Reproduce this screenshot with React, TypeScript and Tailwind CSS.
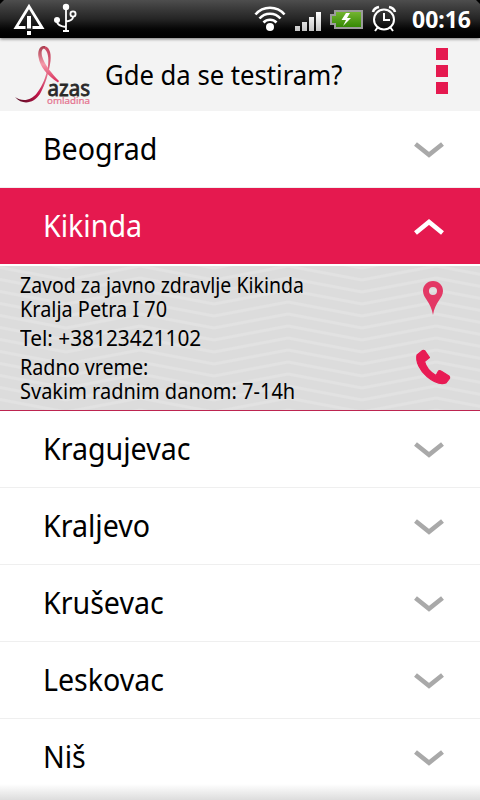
import React from "react";

const FONT = "font-['Noto_Sans','Open_Sans',sans-serif]";

function Chevron({ up = false }: { up?: boolean }) {
  return (
    <svg width="32" height="20" viewBox="0 0 32 20" fill="none" className="mr-[35px] shrink-0">
      {up ? (
        <path d="M2.5 17 L16 6 L29.5 17" stroke="#fff" strokeWidth="4.6" />
      ) : (
        <path d="M2.5 5 L16 15.800 L29.5 5" stroke="#a9a9a9" strokeWidth="4.6" />
      )}
    </svg>
  );
}

function StatusBar() {
  return (
    <div className="relative z-10 flex h-[38px] shrink-0 bg-linear-to-b from-[#4e4e4e] via-[#252525] via-50% to-black shadow-[0_1px_3px_rgba(0,0,0,0.55)]">
      <svg width="480" height="38" viewBox="0 0 480 38" fill="none">
        <defs>
          <linearGradient id="sig" x1="0" y1="0" x2="0" y2="1">
            <stop offset="0" stopColor="#fff" />
            <stop offset="1" stopColor="#c4c4c4" />
          </linearGradient>
          <linearGradient id="bat" x1="0" y1="0" x2="0" y2="1">
            <stop offset="0" stopColor="#77b733" />
            <stop offset="1" stopColor="#318600" />
          </linearGradient>
        </defs>
        <path d="M0 0H4L0 4ZM480 0H476L480 4Z" fill="#000" />
        <path d="M29 6.500 L42 27.500 H16 Z" stroke="#fff" strokeWidth="2.800" />
        <path d="M25.500 16H32.500V30H25.500Z" fill="#1e1e1e" />
        <path d="M27 16H31V28.500H27ZM27 31H31V35H27Z" fill="#fff" />
        <g stroke="#fff" strokeWidth="1.8">
          <path d="M66 7V31M57 21Q57 26 66 27M73 16V17Q73 20.500 66 21.500" />
          <circle cx="73" cy="14" r="2.600" fill="#333" />
        </g>
        <g fill="#fff">
          <circle cx="66" cy="7" r="3.2" />
          <circle cx="57" cy="20" r="3" />
          <path d="M63 30H69V32H63Z" />
        </g>
        <g stroke="#fff" strokeWidth="2.600">
          <path d="M255.500 14.500A19 19 0 0 1 284.500 14.500M259.500 18.500A14 14 0 0 1 280.500 18.500M263.500 22.500A9 9 0 0 1 276.500 22.500" />
        </g>
        <circle cx="270" cy="27" r="4" fill="#fff" />
        <path d="M295 26h5v5h-5zM302 22h5v9h-5zM309 17h5v14h-5zM316 12h5v19h-5z" fill="url(#sig)" />
        <path d="M335 11H362V28H335V24H331V15H335Z" fill="url(#bat)" stroke="#9b9b9b" strokeWidth="2" />
        <path d="M346 13L341.500 20H346L343 26L351 18H347L350 13Z" fill="#fff" />
        <g stroke="#fff">
          <circle cx="384" cy="19.500" r="10" strokeWidth="2" />
          <path d="M384 13V20H390" strokeWidth="2" />
          <path d="M373 12Q374 8 379 7M389 7Q394 8 395 12" strokeWidth="2.600" />
          <path d="M378 27L375 31M390 27L393 31" strokeWidth="2" />
        </g>
        <text x="412" y="27.500" fontSize="23" fontWeight="700" fill="#fff" textLength="59" lengthAdjust="spacingAndGlyphs" className={FONT}>00:16</text>
      </svg>
    </div>
  );
}

function Logo() {
  return (
    <svg width="96" height="72" viewBox="0 38 96 72" fill="none" className="shrink-0">
      <defs>
        <linearGradient id="tail" x1="0" y1="1" x2="1" y2="0">
          <stop offset="0" stopColor="#4e0b20" />
          <stop offset=".4" stopColor="#c3164a" />
          <stop offset=".7" stopColor="#e4778f" />
          <stop offset="1" stopColor="#c03a55" />
        </linearGradient>
        <linearGradient id="loop" x1="0" y1="0" x2="0" y2="1">
          <stop offset="0" stopColor="#a73b4c" />
          <stop offset=".5" stopColor="#f59aaa" />
          <stop offset="1" stopColor="#d72756" />
        </linearGradient>
      </defs>
      <path d="M15 96C22 101 31 100 37 92C43 84 46 76 48 65C49 57 48 50 44 47.500L43 45C49 45 51.500 51 50.500 60C49 72 45 84 40 93C34 102 23 105 15 96Z" fill="url(#tail)" />
      <path d="M45 45C39.500 44 37.500 50 38.500 56C40 66 47 74 58 81.500L59 80C52 73 44 63 42 55C41 50 42 47.500 45 47.500Z" fill="url(#loop)" />
      <text x="47.500" y="94.500" fontSize="21.500" fill="#292929" stroke="#292929" strokeWidth=".8" textLength="42.500" lengthAdjust="spacingAndGlyphs" className={FONT}>azas</text>
      <text x="47" y="102.500" fontSize="8" fill="#e57591" stroke="#e57591" strokeWidth=".2" textLength="43" lengthAdjust="spacingAndGlyphs" className={FONT}>omladina</text>
    </svg>
  );
}

function Row({ name, active = false }: { name: string; active?: boolean }) {
  return (
    <div className={active ? "flex h-[76px] shrink-0 items-center justify-between bg-[#e5194f] pl-[43px] text-white" : "flex h-[77px] shrink-0 items-center justify-between border-b border-[#efefef] bg-white pl-[43px] text-black"}>
      <span className="origin-left scale-x-[0.953] text-[30px] leading-[40px]">{name}</span>
      <Chevron up={active} />
    </div>
  );
}

function Details() {
  return (
    <div className="relative mt-[2px] flex h-[145px] shrink-0 justify-between border-b border-[#bd2450] bg-[#dcdcdc]">
      <svg width="480" height="144" className="absolute inset-0">
        <defs>
          <pattern id="waves" width="148" height="12" patternUnits="userSpaceOnUse" x="-8">
            <path d="M-10 -10L0 -12L74 2L148 -12L158 -10M-10 2L0 0L74 14L148 0L158 2M-10 14L0 12L74 26L148 12L158 14" fill="none" stroke="#e2e2e2" strokeWidth="3" />
          </pattern>
        </defs>
        <rect width="480" height="144" fill="url(#waves)" />
      </svg>
      <div className="relative flex flex-col gap-[5px] pl-5 pt-[7px] text-[21.500px] leading-[24px] whitespace-nowrap text-black">
        <div>
          <p className="origin-left scale-x-[0.906]">Zavod za javno zdravlje Kikinda</p>
          <p className="origin-left scale-x-[0.925]">Kralja Petra I 70</p>
        </div>
        <p className="origin-left scale-x-[0.969]">Tel: +38123421102</p>
        <div>
          <p className="origin-left scale-x-[0.917]">Radno vreme:</p>
          <p className="origin-left scale-x-[0.93]">Svakim radnim danom: 7-14h</p>
        </div>
      </div>
      <svg width="60" height="144" viewBox="405 266 60 144" className="relative mr-[15px] shrink-0">
        <path fillRule="evenodd" d="M433 281C427 281 423 285.500 423 291C423 298 431 302 433 315C435 302 443 298 443 291C443 285.500 439 281 433 281ZM433 287A4 4 0 1 1 433 295A4 4 0 1 1 433 287Z" fill="#e33865" />
        <path d="M417 355L422.500 350.500Q424 350 425 351L429.500 357.500L424.500 361.500C426 367.500 430.500 372.500 436 375.500L438.500 371Q439.500 370 441 371L449 376Q450 377 449.500 378.500L446 383C441 384.500 434 382.500 427 376.500C419.500 370 415.500 361.500 417 355Z" fill="#e81b54" strokeLinejoin="round" stroke="#e81b54" strokeWidth="1.2" />
      </svg>
    </div>
  );
}

export default function App() {
  return (
    <div className={`relative flex h-[800px] w-[480px] flex-col overflow-hidden bg-white ${FONT}`}>
      <StatusBar />
      <header className="flex h-[73px] shrink-0 items-center bg-[#f3f3f3]">
        <Logo />
        <h1 className="mt-[2px] ml-[9px] origin-left scale-x-[0.95] text-[27px] whitespace-nowrap text-black">Gde da se testiram?</h1>
        <div className="mr-8 mb-[7px] ml-auto flex flex-col gap-[5px]">
          <i className="size-3 bg-[#e5194f]" />
          <i className="size-3 bg-[#e5194f]" />
          <i className="size-3 bg-[#e5194f]" />
        </div>
      </header>
      <main className="flex flex-col">
        <Row name="Beograd" />
        <Row name="Kikinda" active />
        <Details />
        <Row name="Kragujevac" />
        <Row name="Kraljevo" />
        <Row name="Kruševac" />
        <Row name="Leskovac" />
        <Row name="Niš" />
      </main>
      <div className="absolute inset-x-0 bottom-0 h-4 bg-linear-to-b from-white to-[#dddddd]" />
    </div>
  );
}
